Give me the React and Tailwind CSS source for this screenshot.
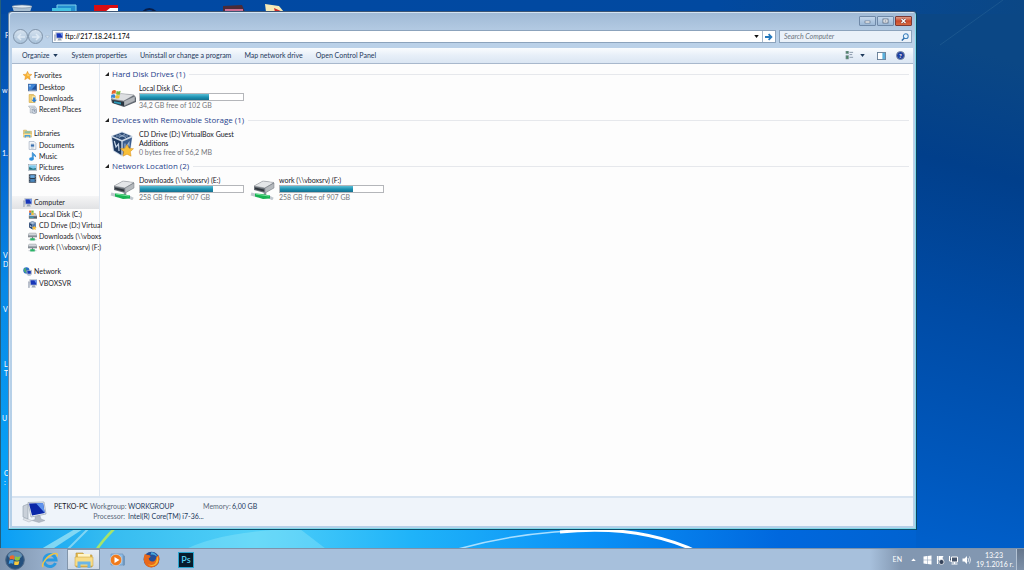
const quickLinks = [
  {
    title: 'Favorites',
    icon: StarIcon,
    items: [
      { label: 'Desktop', icon: DesktopIcon },
      { label: 'Downloads', icon: DownloadsIcon },
      { label: 'Recent Places', icon: RecentIcon },
    ],
  },
  {
    title: 'Libraries',
    icon: LibraryIcon,
    items: [
      { label: 'Documents', icon: DocumentIcon },
      { label: 'Music', icon: MusicIcon },
      { label: 'Pictures', icon: PictureIcon },
      { label: 'Videos', icon: VideoIcon },
    ],
  },
  {
    title: 'Computer',
    icon: ComputerIcon,
    selected: true,
    items: [
      { label: 'Local Disk (C:)', icon: DiskIcon },
      { label: 'CD Drive (D:) Virtual', icon: CubeIcon },
      { label: 'Downloads (\\\\vboxs', icon: NetDriveIcon },
      { label: 'work (\\\\vboxsrv) (F:)', icon: NetDriveIcon },
    ],
  },
  {
    title: 'Network',
    icon: NetworkIcon,
    items: [{ label: 'VBOXSVR', icon: ComputerIcon }],
  },
]

const commands = ['System properties', 'Uninstall or change a program', 'Map network drive', 'Open Control Panel']

const desktopLabels = [
  { text: 'P', top: 31, left: 5 },
  { text: 'w', top: 86, left: 2 },
  { text: '1.', top: 149, left: 2 },
  { text: 'V\nD', top: 251, left: 3 },
  { text: 'V', top: 305, left: 3 },
  { text: 'L\nT', top: 360, left: 4 },
  { text: 'U', top: 414, left: 2 },
  { text: 'C\n:', top: 469, left: 4 },
]

function StarIcon({ className }) {
  return (
    <svg viewBox="0 0 16 16" className={className}>
      <path d="M8 0.5 10.3 5.6 15.8 6.2 11.7 9.9 12.9 15.4 8 12.6 3.1 15.4 4.3 9.9 0.2 6.2 5.7 5.6Z" fill="#f9b233" stroke="#e08a1c" strokeWidth="0.8" />
      <path d="M8 3 9.4 6.7 13 7.1 8 9Z" fill="#ffe48a" />
    </svg>
  )
}

function DesktopIcon({ className }) {
  return (
    <svg viewBox="0 0 16 16" className={className}>
      <rect x="1" y="2" width="14" height="12" fill="#1d4f9c" stroke="#1b3a70" />
      <path d="M1 2h14L6 12H1Z" fill="#3f86d8" />
      <rect x="1" y="12" width="14" height="2" fill="#8aa5c8" />
      <rect x="2" y="4" width="3" height="2" fill="#cfe4f7" />
    </svg>
  )
}

function DownloadsIcon({ className }) {
  return (
    <svg viewBox="0 0 16 16" className={className}>
      <path d="M2 1h8l2 3v11H2Z" fill="#f3d377" stroke="#c79b35" />
      <path d="M6 3h7v12H6Z" fill="#f9e6a6" stroke="#cda545" strokeWidth="0.6" />
      <path d="M9 6h4v4h3l-5 5-5-5h3Z" fill="#2f7fd6" />
    </svg>
  )
}

function RecentIcon({ className }) {
  return (
    <svg viewBox="0 0 16 16" className={className}>
      <path d="M1 2h11l3 4v8H4V6Z" fill="#e3e8ee" stroke="#8d99a8" />
      <path d="M5 5h7M6 8h6" stroke="#8794a6" />
      <circle cx="11" cy="11" r="4" fill="#d3dce8" stroke="#7b8898" />
      <path d="M11 8.5V11h2" stroke="#4a586c" fill="none" />
    </svg>
  )
}

function LibraryIcon({ className }) {
  return (
    <svg viewBox="0 0 16 16" className={className}>
      <path d="M1 2h5l1 2h8v10H1Z" fill="#efcf74" stroke="#bd973d" strokeWidth="0.8" />
      <rect x="3" y="4" width="10" height="4" fill="#8cc0a8" />
      <path d="M0 8h16v6H0Z" fill="#f8e3a0" stroke="#c9a652" strokeWidth="0.6" />
      <path d="M4 15v-3h8v3" stroke="#4b9fdb" strokeWidth="2.4" fill="none" />
    </svg>
  )
}

function DocumentIcon({ className }) {
  return (
    <svg viewBox="0 0 16 16" className={className}>
      <path d="M2 1h9l3 3v11H2Z" fill="#f8fafc" stroke="#8b9bb0" />
      <path d="M5 5h6M5 11h6M5 13h5" stroke="#a8b5c6" />
      <rect x="5" y="6" width="6" height="4" fill="#3a6fae" />
    </svg>
  )
}

function MusicIcon({ className }) {
  return (
    <svg viewBox="0 0 16 16" className={className}>
      <path d="M7.500 13V1h1c1 3 6 3 5 8-1-2-2-3-4-3v7Z" fill="#3f9be0" stroke="#2b81c8" />
      <ellipse cx="6" cy="12.500" rx="4" ry="3" fill="#2f8fdc" />
    </svg>
  )
}

function PictureIcon({ className }) {
  return (
    <svg viewBox="0 0 16 16" className={className}>
      <rect x="0.5" y="2.5" width="15" height="11" fill="#fff" stroke="#8c9cab" />
      <rect x="2" y="4" width="12" height="8" fill="#7dc7ea" />
      <path d="M2 12V7l4 2 3 1 5-1v3Z" fill="#216f7c" />
    </svg>
  )
}

function VideoIcon({ className }) {
  return (
    <svg viewBox="0 0 16 16" className={className}>
      <rect x="1.5" y="0.5" width="13" height="15" fill="#2b3a4c" />
      <rect x="4" y="2" width="8" height="5" fill="#67a6dc" />
      <rect x="4" y="9" width="8" height="5" fill="#4b88bf" />
      <path d="M2.8 1v14M13.2 1v14" stroke="#c3d0dc" strokeDasharray="1.4 1.4" />
    </svg>
  )
}

function ComputerIcon({ className }) {
  return (
    <svg viewBox="0 0 16 16" className={className}>
      <path d="M0 5h3v10H0Z" fill="#c2cad5" stroke="#8994a3" strokeWidth="0.6" />
      <path d="M3 1h13v10H4Z" fill="#d9e1ea" stroke="#8792a6" strokeWidth="0.7" />
      <path d="M4.300 2h10.700v8H5Z" fill="#1836b8" />
      <path d="M11 2h4v7Z" fill="#6f9bec" />
      <path d="M8 11h4l2 4H6Z" fill="#9aa6b6" />
    </svg>
  )
}

function DiskIcon({ className }) {
  return (
    <svg viewBox="0 0 16 16" className={className}>
      <path d="M3 7 13 6 16 12v3H2v-4Z" fill="#c4c9cf" stroke="#686e77" strokeWidth="0.7" />
      <path d="M2 11h14v4H2Z" fill="#58616e" />
      <rect x="3" y="12" width="7" height="2" fill="#37a5bd" />
      <path d="M2 1h4v4H2Z" fill="#e8662c" />
      <path d="M6 1h4v4H6Z" fill="#75b63c" />
      <path d="M2 5h4v4H2Z" fill="#3a82d4" />
      <path d="M6 5h4v4H6Z" fill="#f2bd32" />
    </svg>
  )
}

function CubeIcon({ className }) {
  return (
    <svg viewBox="0 0 16 16" className={className}>
      <path d="M8 0.500 14 3.500 8 6.500 2 3.500Z" fill="#a9c0dc" stroke="#223d66" strokeWidth="0.8" />
      <path d="M2 3.500 8 6.500V15L2 11.500Z" fill="#20406f" />
      <path d="M14 3.500 8 6.500V15L14 11.500Z" fill="#4d76ad" />
      <path d="M4 7 6 9V11L4 10Z" fill="#dfe9f5" />
      <path d="m11 8 1.500 2.500 3 .4-2.200 2 .6 3L11 14.500 8.400 15.900l.5-3-2.100-2 3-.4Z" fill="#f6bd3c" />
    </svg>
  )
}

function NetDriveIcon({ className }) {
  return (
    <svg viewBox="0 0 16 16" className={className}>
      <path d="M0 4 3 2h11l2 3v4H0Z" fill="#d2d6db" stroke="#72787f" strokeWidth="0.7" />
      <path d="M0 6h16v3H0Z" fill="#868d96" />
      <path d="M8 9v4" stroke="#737a83" strokeWidth="2" />
      <rect x="1" y="13" width="14" height="1.500" fill="#b5bdc6" />
      <rect x="4" y="11" width="8" height="4" fill="#2bb467" />
    </svg>
  )
}

function NetworkIcon({ className }) {
  return (
    <svg viewBox="0 0 16 16" className={className}>
      <circle cx="6" cy="6" r="5.500" fill="#2a70c8" />
      <path d="M2 3c3-3 4 0 3 2s2 2 1 5C3 10 1 7 2 3Z" fill="#4cb26a" />
      <path d="M6 6h9v7H7Z" fill="#d5dfea" stroke="#61708a" strokeWidth="0.7" />
      <path d="M7.500 7H14v5H8Z" fill="#1638b4" />
      <path d="M9 13h4l1 2.500H8Z" fill="#aab8ca" />
    </svg>
  )
}

function LocalDriveArt() {
  return (
    <svg viewBox="0 0 26 18" className="w-[26px] h-[18px]">
      <path d="M1 10 11 5l13 1 2 3v4l-12 5L2 14Z" fill="#5d646d" />
      <path d="M1 10 11 4.500 24 6 14 12Z" fill="#dcdee1" stroke="#8c9197" strokeWidth="0.5" />
      <path d="M14 12 25 7v5l-11 5Z" fill="#b2b6bb" stroke="#676d74" strokeWidth="0.5" />
      <path d="M2 11 14 13v4L3 14Z" fill="#28343f" />
      <path d="M4 12.300 11 13.500v2L4 14Z" fill="#2d98b7" />
      <path d="M2 2c2-1.400 3-1 4-.3L5.500 5c-1-.6-2.500-.6-4 .3Z" fill="#e8632b" />
      <path d="M6.600 2c1.400.7 2.600.6 4-.2L10 5.200c-1.400.8-2.600.7-4 0Z" fill="#79b83c" />
      <path d="M1.300 6c1.500-1 2.800-.9 4-.2L4.800 9C3.600 8.300 2.300 8.300.9 9Z" fill="#3884d6" />
      <path d="M5.800 6c1.400.8 2.700.7 4 0L9.300 9c-1.400.8-2.600.7-4 0Z" fill="#f4be2f" />
    </svg>
  )
}

function NetworkDriveArt() {
  return (
    <svg viewBox="0 0 26 20" className="w-[26px] h-5">
      <path d="M4 6 13 1l11 1.500v5L15 13 4 10Z" fill="#6b7178" />
      <path d="M4 6 13 1 24 2.500 15 8Z" fill="#e4e6e8" stroke="#92979c" strokeWidth="0.5" />
      <path d="M15 8 24 3v5l-9 5Z" fill="#b5b9bd" stroke="#747a80" strokeWidth="0.5" />
      <path d="M5 7.500 14 9.500v2L5 9.300Z" fill="#30363d" />
      <path d="M15 12v3" stroke="#8b939b" strokeWidth="2.500" />
      <path d="M1 14 8 16M19 17l4 2" stroke="#c1c8cf" strokeWidth="3" />
      <path d="M5 13.500 12 14l8 1.500v3L13 19l-8-2.500Z" fill="#17b352" />
      <path d="M6 14 12 15l7 1" stroke="#77e09c" fill="none" />
    </svg>
  )
}

function VirtualBoxArt() {
  return (
    <svg viewBox="0 0 24 26" className="w-6 h-[26px]">
      <path d="M12 0.500 22.500 5 20.500 20 12 25.500 3 20 1 5Z" fill="#cbd7e6" />
      <path d="M12 1.500 21 5 12 9 2.500 5Z" fill="#2c4a74" />
      <path d="m6 5 12 0M9 6.500l6-3.500M9 3l7 3.800" stroke="#9fb6d2" strokeWidth="0.8" />
      <path d="M2 6.500 11.300 10.500V24L4 19.500Z" fill="#1d3960" />
      <path d="M22 6.500 12.700 10.500V24l7.300-4.500Z" fill="#3a5c8d" />
      <path d="m4.300 10 1.700 6L8.500 13l.5 7" fill="none" stroke="#c6d5e7" strokeWidth="1.200" />
      <path d="M15 12.500v5l4-6v4" fill="none" stroke="#9db6d3" strokeWidth="1.100" />
      <path d="m17 13.500 2 3.700 4.500.5-3.200 3 .8 4.500-4.100-2-4 2 .8-4.500-3.300-3 4.400-.5Z" fill="#f8bf38" stroke="#d98f1c" strokeWidth="0.5" />
    </svg>
  )
}

function MonitorArt() {
  return (
    <svg viewBox="0 0 26 22" className="w-[26px] h-[22px]">
      <path d="m1 5 5-2v15l-5-2Z" fill="#c9d0d9" stroke="#8f9aa8" strokeWidth="0.6" />
      <path d="M6 1.500 22 1l2 12-15 3Z" fill="#eef2f6" stroke="#8893a3" strokeWidth="0.6" />
      <path d="m7 2.500 14-.5 1.800 10L10 14.500Z" fill="#0b27a8" />
      <path d="m14 2.300 7-.3L22.800 12Z" fill="#5f93ec" />
      <path d="m13 15.500 5-1 1 3.500 4 1.500-6 2-7-2 3-1Z" fill="#b2bac5" stroke="#959fab" strokeWidth="0.4" />
      <path d="m2 17 8 2.500-3 1.500-6-2.500Z" fill="#e3e7ec" stroke="#9ba5b1" strokeWidth="0.4" />
    </svg>
  )
}

function Wallpaper() {
  return (
    <svg viewBox="0 0 1024 570" preserveAspectRatio="none" className="absolute inset-0 w-full h-full" aria-hidden="true">
      <defs>
        <linearGradient id="left" x1="0" y1="0" x2="0" y2="1">
          <stop offset="0" stopColor="#0349a0" />
          <stop offset="0.250" stopColor="#0562cc" />
          <stop offset="0.500" stopColor="#0788e6" />
          <stop offset="0.800" stopColor="#089ff5" />
          <stop offset="1" stopColor="#0aa4f6" />
        </linearGradient>
        <linearGradient id="right" gradientUnits="userSpaceOnUse" x1="1010" y1="60" x2="880" y2="560">
          <stop offset="0" stopColor="#0b4785" />
          <stop offset="0.220" stopColor="#013f8b" />
          <stop offset="0.500" stopColor="#004ba5" />
          <stop offset="0.800" stopColor="#0058bd" />
          <stop offset="1" stopColor="#0062d0" />
        </linearGradient>
        <linearGradient id="top" x1="0" y1="0" x2="1" y2="0">
          <stop offset="0" stopColor="#0149a4" />
          <stop offset="0.700" stopColor="#0149a0" />
          <stop offset="1" stopColor="#0b4785" />
        </linearGradient>
        <linearGradient id="bottom" x1="0" y1="0" x2="1" y2="0">
          <stop offset="0" stopColor="#0a9ef5" />
          <stop offset="0.120" stopColor="#36bcf0" />
          <stop offset="0.280" stopColor="#50d0f8" />
          <stop offset="0.450" stopColor="#1fb3f9" />
          <stop offset="0.650" stopColor="#0a90f6" />
          <stop offset="0.850" stopColor="#0068de" />
          <stop offset="1" stopColor="#0062d0" />
        </linearGradient>
      </defs>
      <rect width="100" height="570" fill="url(#left)" />
      <rect x="850" width="174" height="570" fill="url(#right)" />
      <rect width="1024" height="14" fill="url(#top)" />
      <rect y="520" width="916" height="50" fill="url(#bottom)" />
      <rect width="1" height="570" fill="#245f7c" />
      <path d="M36 552 75 529h8L48 552Z" fill="#a8e8f5" opacity="0.700" />
      <path d="M65 552 88 529" stroke="#b9ecf7" strokeWidth="2" opacity="0.600" />
      <path d="M95 552Q102 541 114 529" stroke="#a5e46b" strokeWidth="2.500" fill="none" />
      <path d="M180 552Q220 530 300 529L330 552Z" fill="#9cecfa" opacity="0.350" />
      <path d="M458 549Q530 529 610 530" stroke="#a9dfff" strokeWidth="1.500" fill="none" />
      <path d="M560 532Q640 524 698 552" stroke="#fff" strokeWidth="3" fill="none" />
      <path d="M940 45 1003 0" stroke="#37739f" strokeWidth="0.700" opacity="0.500" />
    </svg>
  )
}

function DesktopShortcuts() {
  return (
    <div aria-hidden="true">
      <svg viewBox="0 0 300 12" className="absolute left-0 top-0 w-[300px] h-3">
        <path d="M12 6h20l-2 6H14Z" fill="#a9bfd2" />
        <ellipse cx="22" cy="6.500" rx="10" ry="1.500" fill="#e1ebf2" stroke="#74879a" strokeWidth="0.600" />
        <path d="M57 5h19v7H57Z" fill="#238fd0" stroke="#7fd3ee" />
        <path d="M52 8h19v4H52Z" fill="#44c2e2" />
        <path d="M94 5h24v7H94Z" fill="#d90d12" />
        <path d="m105 12 5-4h8v4Z" fill="#fff" />
        <path d="M143 12q6-6 13 0" stroke="#071d49" strokeWidth="2" fill="none" />
        <path d="m223 6 19-1 3 7h-22Z" fill="#4b2b38" />
        <path d="M225 9h18v3h-18Z" fill="#cb6e92" />
        <path d="m265 4 14 2 5 6h-18Z" fill="#f5e9b7" />
        <path d="m274 8 9 4h-8Z" fill="#d12d2a" />
      </svg>
      {desktopLabels.map(l => (
        <span
          key={l.top}
          className="absolute text-[7px] leading-[9px] text-white whitespace-pre"
          style={{ top: l.top, left: l.left }}
        >
          {l.text}
        </span>
      ))}
    </div>
  )
}

function WindowButton({ label, className, children }) {
  return (
    <button aria-label={label} className={`flex items-center justify-center h-[10px] w-[17px] rounded-[1px] border ${className}`}>
      <svg viewBox="0 0 9 6" className="w-[9px] h-[6px]">{children}</svg>
    </button>
  )
}

function TitleBar() {
  return (
    <div className="flex justify-end gap-px h-[17px] pt-1 pr-px">
      <WindowButton label="Minimize" className="border-[#6f89a8] bg-linear-to-b from-[#c3d6ea] to-[#9cb8d6]">
        <rect x="2" y="3" width="5" height="2" fill="#fff" stroke="#56657a" strokeWidth="0.600" />
      </WindowButton>
      <WindowButton label="Restore" className="border-[#6f89a8] bg-linear-to-b from-[#c3d6ea] to-[#9cb8d6]">
        <rect x="2" y="1" width="5" height="4" fill="#fff" stroke="#56657a" strokeWidth="0.800" />
        <rect x="3.500" y="2.500" width="2" height="1" fill="#56657a" />
      </WindowButton>
      <WindowButton label="Close" className="border-[#7d3a35] bg-linear-to-b from-[#dd9c88] via-[#c9492b] to-[#d8683f]">
        <path d="M2.500 1 6.500 5M6.500 1 2.500 5" stroke="#5d3030" strokeWidth="2.200" />
        <path d="M2.500 1 6.500 5M6.500 1 2.500 5" stroke="#fff" strokeWidth="1.400" />
      </WindowButton>
    </div>
  )
}

function NavButton({ label, path }) {
  return (
    <button aria-label={label} className="flex items-center justify-center size-[15px] rounded-full border border-[#7f93a9] bg-linear-to-b from-[#d5e2ef] to-[#a9c2da]">
      <svg viewBox="0 0 10 10" className="size-[10px]">
        <path d={path} stroke="#dfeaf5" strokeWidth="1.500" fill="none" />
      </svg>
    </button>
  )
}

function AddressBar() {
  return (
    <div className="flex items-center h-[15px] pl-px pr-px mb-1">
      <NavButton label="Back" path="M9 5H2M5 2 2 5l3 3" />
      <NavButton label="Forward" path="M1 5h7M5 2l3 3-3 3" />
      <svg viewBox="0 0 6 4" className="w-[5px] h-1 mx-[2px]">
        <path d="M0.500 0.500h5L3 3.500Z" fill="#dce8f3" stroke="#8fa5bd" strokeWidth="0.500" />
      </svg>
      <div className="flex flex-1 items-center h-[13px] bg-white border border-[#8ca3bc]">
        <ComputerIcon className="size-[9px] mx-px" />
        <input
          aria-label="Address"
          defaultValue="ftp://217.18.241.174"
          className="flex-1 min-w-0 h-[11px] pl-px text-[7px] leading-[11px] text-black outline-none"
        />
        <button aria-label="Previous locations" className="flex items-center justify-center w-[11px] h-full">
          <svg viewBox="0 0 6 4" className="w-[5px] h-[3px]"><path d="M0 0h6L3 4Z" fill="#111" /></svg>
        </button>
        <button aria-label="Go" className="flex items-center justify-center w-[13px] h-full border-l border-[#a5b7ca]">
          <svg viewBox="0 0 10 10" className="size-2"><path d="M0 5h7M4.500 1.500 8 5 4.500 8.500" stroke="#2679bd" strokeWidth="2.200" fill="none" /></svg>
        </button>
      </div>
      <div className="flex items-center w-[133px] h-[13px] ml-[3px] pl-1 pr-[2px] bg-[#eaf1f9] border border-[#8ca3bc]">
        <input
          aria-label="Search Computer"
          placeholder="Search Computer"
          className="flex-1 min-w-0 h-[11px] text-[7px] leading-[11px] italic placeholder:text-[#6b7480] outline-none"
        />
        <svg viewBox="0 0 10 10" className="size-2">
          <circle cx="6" cy="4" r="3" stroke="#3c7fbd" strokeWidth="1.300" fill="#e6f2fb" />
          <path d="M4 6.500 1 9.500" stroke="#2f6ca8" strokeWidth="1.700" />
        </svg>
      </div>
    </div>
  )
}

function Toolbar() {
  return (
    <div className="flex items-center h-4 pl-[10px] pr-2 text-[7px] text-[#1e395b] bg-linear-to-b from-[#fafcfe] via-[#e7eff8] to-[#dbe6f3] border-b border-[#a8b8cc]">
      <button className="flex items-center gap-[3px] mr-[14px]">
        Organize
        <svg viewBox="0 0 6 4" className="w-[5px] h-[3px]"><path d="M0 0h6L3 4Z" fill="#1e395b" /></svg>
      </button>
      <div className="flex gap-[13px]">
        {commands.map(c => <button key={c}>{c}</button>)}
      </div>
      <div className="flex items-center ml-auto">
        <button aria-label="Change your view" className="flex items-center gap-[6px]">
          <svg viewBox="0 0 10 10" className="size-[9px]">
            <path d="M1 0h3v3H1ZM1 5h3v4H1Z" fill="#4e8568" stroke="#8b98a8" strokeWidth="0.600" />
            <path d="M5 1.500h4M5 4h3M5 7h4" stroke="#8090a3" />
          </svg>
          <svg viewBox="0 0 6 4" className="w-[5px] h-[3px]"><path d="M0 0h6L3 4Z" fill="#1e395b" /></svg>
        </button>
        <button aria-label="Show the preview pane" className="ml-3">
          <svg viewBox="0 0 10 9" className="w-[9px] h-2">
            <rect x="0.500" y="0.500" width="9" height="8" fill="#fff" stroke="#607993" />
            <rect x="6" y="1" width="3" height="7" fill="#5ab0dc" />
          </svg>
        </button>
        <button aria-label="Get help" className="flex items-center justify-center size-[9px] ml-[10px] rounded-full bg-[#1e3fa0] border border-[#7d8ca5] text-[6px] leading-none font-bold text-white">
          ?
        </button>
      </div>
    </div>
  )
}

function Sidebar() {
  return (
    <nav className="flex flex-col gap-3 shrink-0 w-[88px] pt-[5px] border-r border-[#e0e8f2] text-[7px] text-[#1c1c28] whitespace-nowrap">
      {quickLinks.map(({ title, icon: Icon, items, selected }) => (
        <div key={title}>
          <a
            href="#"
            className={`flex items-center gap-[2px] h-[13px] pl-[11px] ${selected ? 'bg-linear-to-b from-[#f5f5f6] to-[#e1e2e4]' : ''}`}
          >
            <Icon className="size-[9px] shrink-0" />
            {title}
          </a>
          {items.map(({ label, icon: ItemIcon }) => (
            <a key={label} href="#" className="flex items-center gap-[2px] h-[11px] pl-4">
              <ItemIcon className="size-[9px] shrink-0" />
              {label}
            </a>
          ))}
        </div>
      ))}
    </nav>
  )
}

function Section({ title, children }) {
  return (
    <section className="h-[46px]">
      <div className="flex items-center h-3">
        <svg viewBox="0 0 4 4" className="size-1 mr-[3px]"><path d="M4 0v4H0Z" fill="#222" /></svg>
        <h2 className="font-['Open_Sans',sans-serif] text-[8px] leading-3 text-[#1f3f8c]">{title}</h2>
        <span className="flex-1 h-px ml-1 bg-[#e6e8ec]" />
      </div>
      <div className="flex pt-1">{children}</div>
    </section>
  )
}

function Drive({ art, name, free, used }) {
  return (
    <div className="flex w-[140px] pl-[5px]">
      <div className="flex items-center shrink-0 w-[29px] h-[27px]">{art}</div>
      <div className="flex-1 min-w-0 text-[7px] leading-[9px] text-[#16161e]">
        <div className="pr-2">{name}</div>
        {used && (
          <div className="h-2 w-[105px] border border-[#b4b6ba] bg-white">
            <div className="h-full bg-linear-to-b from-[#58bfd6] via-[#1c94b4] to-[#17708f]" style={{ width: `${used}%` }} />
          </div>
        )}
        <div className="text-[#74767b]">{free}</div>
      </div>
    </div>
  )
}

function DetailsPane() {
  return (
    <div className="flex items-center h-[30px] pl-[10px] bg-[#eff4fa] border-t-2 border-[#d8e4f1] text-[7px] leading-[10px]">
      <MonitorArt />
      <div className="grid grid-cols-[33px_35px_72px_26px_auto] gap-x-[3px] ml-[6px] pb-[2px] whitespace-nowrap text-[#1e395b]">
        <span className="text-[#16161e]">PETKO-PC</span>
        <span className="text-right text-[#5a6779]">Workgroup:</span>
        <span>WORKGROUP</span>
        <span className="text-right text-[#5a6779]">Memory:</span>
        <span>6,00 GB</span>
        <span className="col-start-2 text-right text-[#5a6779]">Processor:</span>
        <span>Intel(R) Core(TM) i7-36...</span>
      </div>
    </div>
  )
}

function ExplorerWindow() {
  return (
    <main className="absolute left-2 top-[11px] right-[107px] bottom-10 flex flex-col px-[3px] pb-[3px] rounded-t-[4px] border border-t-[#3d5674] border-l-[#6a86a4] border-r-[#0d4360] border-b-[#0d4f6b] bg-linear-to-b from-[#9fb9d5] via-[#bbd1e8] via-5% to-[#b5d0e8] shadow-[inset_-1px_-1px_0_#7fd8ea,inset_1px_1px_0_#d5e4f2]">
      <TitleBar />
      <AddressBar />
      <Toolbar />
      <div className="flex flex-1 min-h-0 bg-[#fdfdfd]">
        <Sidebar />
        <div className="flex-1 min-w-0 pt-1 pl-[5px] pr-1">
          <Section title="Hard Disk Drives (1)">
            <Drive art={<LocalDriveArt />} name="Local Disk (C:)" free="34,2 GB free of 102 GB" used={67} />
          </Section>
          <Section title="Devices with Removable Storage (1)">
            <Drive art={<VirtualBoxArt />} name="CD Drive (D:) VirtualBox Guest Additions" free="0 bytes free of 56,2 MB" />
          </Section>
          <Section title="Network Location (2)">
            <Drive art={<NetworkDriveArt />} name={'Downloads (\\\\vboxsrv) (E:)'} free="258 GB free of 907 GB" used={71} />
            <Drive art={<NetworkDriveArt />} name={'work (\\\\vboxsrv) (F:)'} free="258 GB free of 907 GB" used={71} />
          </Section>
        </div>
      </div>
      <DetailsPane />
    </main>
  )
}

function Taskbar() {
  return (
    <footer className="absolute inset-x-0 bottom-0 flex items-center h-[22px] border-t border-[#7d93ac] bg-[#a7c0dc]">
      <div className="flex items-center h-full w-[67px] pl-[5px] bg-linear-to-r from-[#7e93ad] to-[#a3bbd7]">
        <button aria-label="Start">
          <svg viewBox="0 0 20 20" className="size-5">
            <circle cx="10" cy="10" r="9.300" fill="#24507e" stroke="#4c6684" />
            <ellipse cx="10" cy="5.500" rx="7" ry="4" fill="#7eaaca" opacity="0.700" />
            <path d="M5 6q2.500-1.500 4.500 0L9 9.700q-2-1.300-4.500 0Z" fill="#ec6a2e" />
            <path d="M10.300 6.300q2.200 1.300 5 0L14.500 10q-2.400 1.300-4.700 0Z" fill="#8cc63f" />
            <path d="M4.300 10.500q2.500-1.300 4.500 0L8.200 14q-2-1.300-4.500 0Z" fill="#42a0e8" />
            <path d="M9.600 10.900q2.200 1.300 4.700 0l-.7 3.500q-2.400 1.300-4.600 0Z" fill="#fbcb3a" />
          </svg>
        </button>
        <button aria-label="Internet Explorer" className="ml-4">
          <svg viewBox="0 0 18 18" className="size-[18px]">
            <path d="M14.500 12A6 6 0 1 1 15 9H5" stroke="#2a9ae2" strokeWidth="3" fill="none" />
            <path d="M2 16C0 13 6 5 12 3c4-1.500 5 0 4 2.500" stroke="#f2c443" strokeWidth="1.400" fill="none" />
          </svg>
        </button>
      </div>
      <button aria-label="Windows Explorer" className="flex items-center justify-center w-[33px] h-full border border-[#8396ab] bg-linear-to-b from-[#e7edf4] to-[#ced9e6]">
        <svg viewBox="0 0 20 18" className="w-5 h-[18px]">
          <path d="M2 2h7l1 2h8v12H2Z" fill="#e4bd57" stroke="#b78e32" strokeWidth="0.600" />
          <path d="M4 3h12v4H4Z" fill="#fff5c9" />
          <path d="M1 6h18v9H1Z" fill="#f8dc87" stroke="#c79e3d" strokeWidth="0.500" />
          <path d="M5 17v-5h10v5" stroke="#6bb5e6" strokeWidth="3" fill="none" />
        </svg>
      </button>
      <button aria-label="Media Player" className="ml-2">
        <svg viewBox="0 0 18 16" className="w-[18px] h-4">
          <path d="M3 2h12v11H3Z" fill="#8fbce5" stroke="#658fb8" strokeWidth="0.600" />
          <path d="m15 3 2 1v9l-2 1Z" fill="#7197bd" />
          <circle cx="8" cy="8" r="5.700" fill="#f07a1b" stroke="#d4e2ee" strokeWidth="0.600" />
          <path d="m6.500 5 5 3-5 3Z" fill="#fff" />
        </svg>
      </button>
      <button aria-label="Firefox" className="ml-[17px]">
        <svg viewBox="0 0 18 18" className="size-[17px]">
          <circle cx="9" cy="9" r="8.300" fill="#254f98" />
          <path d="M9 1q5 1 6 5-4-3-7-2Z" fill="#46a7dc" />
          <path d="M2 3q1 1 3 1.300Q8 4 8 6L6 8q1 4 5 3 3-1 3-5 2 0 2.500-2Q19 11 14 15.500 8 19.500 3 15-1 10 2 3Z" fill="#e8681b" />
          <path d="M15 5q3 6-1.500 9.500Q9 17.500 5 14q6 2 8-1 2-3 2-8Z" fill="#f9b82f" />
        </svg>
      </button>
      <button aria-label="Photoshop" className="flex items-center justify-center size-4 ml-[18px] border border-[#2ba5cf] bg-[#071c2c] text-[9px] leading-none font-semibold text-[#55cdef]">
        Ps
      </button>
      <div className="flex items-center h-full ml-auto bg-linear-to-r from-[#a7c0dc] to-[#8297b1] to-20% text-[7px] text-white">
        <button className="ml-[23px]">EN</button>
        <button aria-label="Show hidden icons" className="ml-[9px]">
          <svg viewBox="0 0 6 4" className="w-[5px] h-[3px]"><path d="M0 4h6L3 0.500Z" fill="#fff" /></svg>
        </button>
        <svg viewBox="0 0 48 10" className="w-[49px] h-[10px] ml-[6px]" aria-hidden="true">
          <path d="M1 1.500 4.500 1v3.700H1ZM5 1l4-.500v4.200H5ZM1 5.300h3.500V9L1 8.500ZM5 5.300h4v4.200L5 9Z" fill="#fff" />
          <path d="M15 1v8" stroke="#fff" strokeWidth="1.200" />
          <path d="M16 1h5l-1 2 1 2h-5Z" fill="#fff" />
          <circle cx="19" cy="7" r="2.500" fill="#35435a" stroke="#fff" strokeWidth="0.700" />
          <path d="M29 2h6v5h-6ZM27 1v5h2M32 7v2M29 9h6" fill="#46556c" stroke="#fff" strokeWidth="1" />
          <path d="M40 3.500h2l2.500-2.500v8L42 6.500h-2Z" fill="#fff" />
          <path d="M45.500 3q1.500 2 0 4M47 1.500q2 3.500 0 7" stroke="#fff" strokeWidth="0.700" fill="none" />
        </svg>
        <div className="ml-[5px] mr-1 w-9 text-center leading-[9px] whitespace-nowrap">
          <div>13:23</div>
          <div>19.1.2016 г.</div>
        </div>
        <button aria-label="Show desktop" className="w-2 h-full border-l border-[#b3c2d3] bg-linear-to-b from-[#65768c] to-[#7d90a8]" />
      </div>
    </footer>
  )
}

export default function App() {
  return (
    <div className="relative h-screen overflow-hidden bg-[#0050a8] font-['Lato','Open_Sans',sans-serif]">
      <Wallpaper />
      <DesktopShortcuts />
      <ExplorerWindow />
      <Taskbar />
    </div>
  )
}
